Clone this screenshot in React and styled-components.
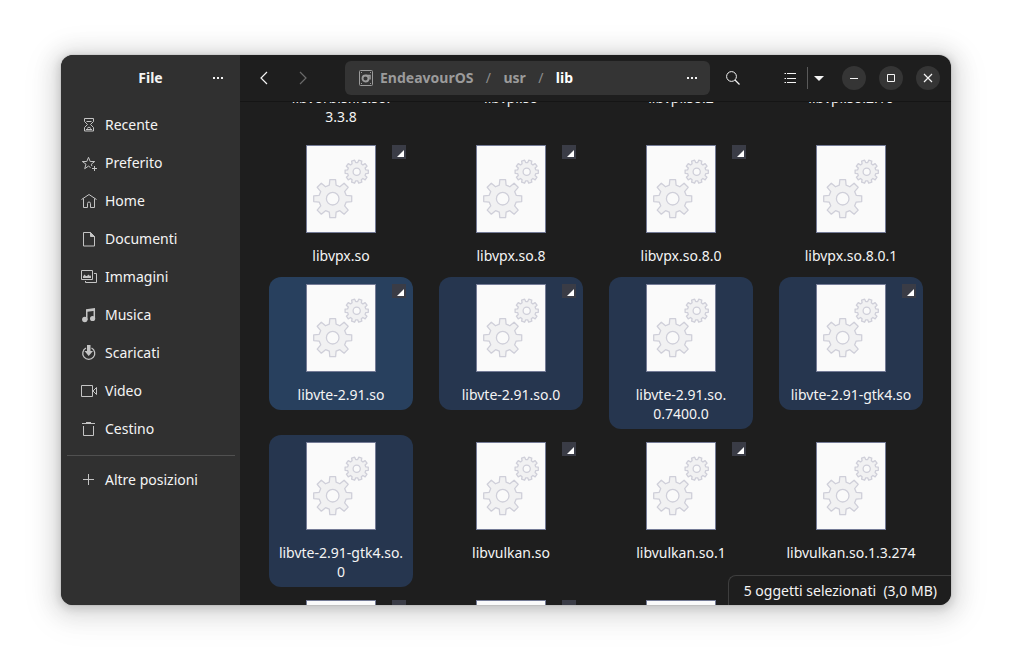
import styled, { createGlobalStyle } from "styled-components";
import { useLayoutEffect, useRef, useState } from "react";

const places = [
  { name: "Recente", icon: "recent" },
  { name: "Preferito", icon: "star" },
  { name: "Home", icon: "home" },
  { name: "Documenti", icon: "document" },
  { name: "Immagini", icon: "pictures" },
  { name: "Musica", icon: "music" },
  { name: "Scaricati", icon: "download" },
  { name: "Video", icon: "video" },
  { name: "Cestino", icon: "trash" },
];

const files = [
  { name: "libvorbisfile.so.\n3.3.8" },
  { name: "libvpl.so", link: true },
  { name: "libvpl.so.2", link: true },
  { name: "libvpl.so.2.10" },
  { name: "libvpx.so", link: true },
  { name: "libvpx.so.8", link: true },
  { name: "libvpx.so.8.0", link: true },
  { name: "libvpx.so.8.0.1" },
  { name: "libvte-2.91.so", link: true, selected: true },
  { name: "libvte-2.91.so.0", link: true, selected: true },
  { name: "libvte-2.91.so.\n0.7400.0", selected: true },
  { name: "libvte-2.91-gtk4.so", link: true, selected: true },
  { name: "libvte-2.91-gtk4.so.\n0", selected: true },
  { name: "libvulkan.so", link: true },
  { name: "libvulkan.so.1", link: true },
  { name: "libvulkan.so.1.3.274" },
  { name: "libwacom.so", link: true },
  { name: "libwacom.so.9", link: true },
  { name: "libwacom.so.9.0.0" },
  { name: "libwayland-client.so", link: true },
];

const icons = {
  recent: (
    <>
      <path d="M3.5 1.5h9v3L9.500 7.500 12.500 10.500v3.500h-9v-3.500L6.500 7.500 3.500 4.500z" />
      <path d="M5.500 4.500h5M5 12.500h6M6 11.500l2-1.500 2 1.500" />
    </>
  ),
  star: (
    <>
      <path d="M9.500 11.500 7.500 10.100 3.700 12.700l1.300-4.500L1.300 5.500h4.500L7.500 1.300l1.700 4.200h4.500L10.300 8.200l.6 2" transform="translate(0 1)" />
      <path d="M13.500 11v5M11 13.500h5" />
    </>
  ),
  home: <path d="M.5 6.500 8 1.500l7.500 5M2.500 5.500v9h4v-4q0-1.500 1.500-1.500t1.500 1.500v4h4v-9" />,
  document: (
    <>
      <path d="M2.500 1.500h7l4 4v9.500h-11z" />
      <path d="M9.500 1.500v4h4z" fill="currentColor" />
    </>
  ),
  pictures: (
    <>
      <path d="M.5 1.500h11v9H.5zM13 4.500h2.500v9h-11V12" />
      <path d="M2 9V7.500L3.500 5.500l1.500 1.500L6 7l1.500-1.500L8.500 7 9 6l1 1.500V9z" fill="currentColor" stroke="none" />
    </>
  ),
  music: (
    <>
      <path d="M5 2.200 14 1v2.700L6.500 4.700V13H5z" fill="currentColor" stroke="none" />
      <path d="M13.300 2v9.500" strokeWidth="1.500" />
      <circle cx="3.800" cy="12.500" r="2.700" fill="currentColor" stroke="none" />
      <circle cx="11.600" cy="11.500" r="2.600" fill="currentColor" stroke="none" />
    </>
  ),
  download: (
    <>
      <path d="M5 3A6 6 0 1 0 10.500 3" strokeWidth="1.300" />
      <path d="M6 0h3.500v6H12L7.700 11 3.500 6H6z" fill="currentColor" stroke="none" />
    </>
  ),
  video: <path d="M.5 2.500h11v11H.5zM12 8l3.500-3.500v7z" />,
  trash: <path d="M2.500 5v9.500h10V5M1 2.500h13M5 1.500h5" />,
  plus: <path d="M7.500 2v11M2 7.500h11" />,
  back: <path d="M11 2 5 8l6 6" strokeWidth="1.200" />,
  forward: <path d="M5 2l6 6-6 6" strokeWidth="1.200" />,
  dots: <path d="M3 7h2v2H3zM7 7h2v2H7zM11 7h2v2h-2z" fill="currentColor" stroke="none" />,
  search: (
    <>
      <circle cx="6.500" cy="6.500" r="4.900" />
      <path d="M10 10l4.500 4.500" strokeWidth="1.300" />
    </>
  ),
  list: <path d="M5 3.500h9M5 8.500h9M5 12.500h9M2.500 3.500h1.500M2.500 8.500h1.500M2.500 12.500h1.500" />,
  down: <path d="M3 6h10L8 11z" fill="currentColor" stroke="none" />,
  minimize: <path d="M4 8.500h8" />,
  maximize: <path d="M4.500 4.500h7v7h-7z" />,
  close: <path d="M4 4l8 8M12 4l-8 8" strokeWidth="1.200" />,
  drive: (
    <>
      <rect x="1.500" y=".5" width="13" height="15" rx="1" />
      <circle cx="7.500" cy="8.500" r="3" strokeWidth="1.900" />
      <path d="M7.500 5.500H12v4" strokeWidth="1.500" />
      <path d="M3 2h1v1H3zM12 2h1v1h-1zM3 13h1v1H3zM12 13h1v1h-1z" fill="currentColor" stroke="none" />
    </>
  ),
};

function Icon({ name }) {
  return (
    <Glyph viewBox="0 0 16 16" aria-hidden="true">
      {icons[name]}
    </Glyph>
  );
}

function gearPath(cx, cy, outer, root, teeth, half, turn) {
  const points = [];
  for (let i = 0; i < teeth; i++) {
    const a = turn + (i * 2 * Math.PI) / teeth;
    const corners = [
      [root, -half],
      [outer, -half * 0.85],
      [outer, half * 0.85],
      [root, half],
    ];
    corners.forEach(([x, y]) => {
      const px = cx + x * Math.cos(a) - y * Math.sin(a);
      const py = cy + x * Math.sin(a) + y * Math.cos(a);
      points.push(`${px.toFixed(2)} ${py.toFixed(2)}`);
    });
  }
  return `M${points.join("L")}Z`;
}

const bigGear = gearPath(26.7, 53.7, 19, 13.5, 8, 3.4, 0);
const smallGear = gearPath(50.7, 26.7, 11.6, 9, 10, 1.9, 0);

function LibraryPage() {
  return (
    <Page viewBox="0 0 70 88" aria-hidden="true">
      <rect x=".5" y=".5" width="69" height="87" fill="#fafafa" stroke="#747b96" />
      <g fill="#f1f1f2" stroke="#cfcfd9" strokeWidth="1.300" strokeLinejoin="round">
        <path d={bigGear} />
        <path d={smallGear} />
        <circle cx="26.700" cy="53.700" r="6.300" fill="#fafafa" />
        <circle cx="50.700" cy="26.700" r="3.600" fill="#fafafa" />
      </g>
    </Page>
  );
}

export default function App() {
  const [selected, setSelected] = useState(
    files.filter((file) => file.selected).map((file) => file.name)
  );
  const view = useRef(null);

  useLayoutEffect(() => {
    view.current.scrollTop = 122;
  }, []);

  return (
    <Desktop>
      <GlobalStyle />
      <Window>
        <Sidebar>
          <SidebarHeader>
            <Title>File</Title>
            <IconButton type="button" aria-label="Menu">
              <Icon name="dots" />
            </IconButton>
          </SidebarHeader>
          <Places>
            {places.map((place) => (
              <Place href="#" key={place.name}>
                <Icon name={place.icon} />
                {place.name}
              </Place>
            ))}
            <Separator />
            <Place href="#">
              <Icon name="plus" />
              Altre posizioni
            </Place>
          </Places>
        </Sidebar>

        <Main>
          <Header>
            <Navigation>
              <IconButton type="button" aria-label="Indietro">
                <Icon name="back" />
              </IconButton>
              <IconButton type="button" aria-label="Avanti" disabled>
                <Icon name="forward" />
              </IconButton>
            </Navigation>
            <PathBar>
              <Crumb href="#">
                <Icon name="drive" />
                EndeavourOS
              </Crumb>
              <Slash>/</Slash>
              <Crumb href="#">usr</Crumb>
              <Slash>/</Slash>
              <Crumb href="#" $current>
                lib
              </Crumb>
              <PathMenu type="button" aria-label="Menu cartella">
                <Icon name="dots" />
              </PathMenu>
            </PathBar>
            <IconButton type="button" aria-label="Cerca">
              <Icon name="search" />
            </IconButton>
            <ViewSwitch>
              <IconButton type="button" aria-label="Vista elenco">
                <Icon name="list" />
              </IconButton>
              <Options type="button" aria-label="Opzioni vista">
                <Icon name="down" />
              </Options>
            </ViewSwitch>
            <WindowButtons>
              <Round type="button" aria-label="Minimizza">
                <Icon name="minimize" />
              </Round>
              <Round type="button" aria-label="Massimizza">
                <Icon name="maximize" />
              </Round>
              <Round type="button" aria-label="Chiudi">
                <Icon name="close" />
              </Round>
            </WindowButtons>
          </Header>

          <View ref={view}>
            <Files>
              {files.map((file, i) => (
                <File
                  type="button"
                  key={file.name}
                  $selected={selected.includes(file.name)}
                  $focused={i === 8}
                  onClick={() => setSelected([file.name])}
                >
                  <LibraryPage />
                  {file.link && <Emblem />}
                  <span>{file.name}</span>
                </File>
              ))}
            </Files>
          </View>
          <Status>5 oggetti selezionati&nbsp; (3,0 MB)</Status>
        </Main>
      </Window>
    </Desktop>
  );
}

const GlobalStyle = createGlobalStyle`
  * {
    box-sizing: border-box;
  }

  body {
    margin: 0;
    background-color: white;
  }

  button, a {
    font: inherit;
    color: inherit;
    text-decoration: none;
  }

  button {
    padding: 0;
    border: none;
    background: none;
  }
`;

const Desktop = styled.div`
  height: 100vh;
  padding: 55px 61px 67px;
  display: flex;
  font-family: "Noto Sans", sans-serif;
  font-size: 14px;
  line-height: 19px;
  color: #f4f4f4;
`;

const Window = styled.div`
  flex: 1;
  min-width: 0;
  display: flex;
  overflow: hidden;
  border-radius: 12px;
  background-color: #1e1e1e;
  box-shadow: 0 2px 8px 2px rgba(0, 0, 0, 0.13),
    0 3px 20px 10px rgba(0, 0, 0, 0.09), 0 6px 32px 16px rgba(0, 0, 0, 0.04),
    0 0 0 1px rgba(0, 0, 0, 0.05);
`;

const Sidebar = styled.aside`
  flex: 0 0 179px;
  line-height: 20px;
  background-color: #303030;
`;

const SidebarHeader = styled.div`
  height: 46px;
  padding: 0 5px;
  display: grid;
  grid-template-columns: 34px 1fr 34px;
  align-items: center;
`;

const Title = styled.h1`
  grid-column: 2;
  margin: 0;
  font-size: 14px;
  text-align: center;
`;

const Glyph = styled.svg`
  flex: none;
  display: block;
  width: 16px;
  height: 16px;
  fill: none;
  stroke: currentColor;
`;

const IconButton = styled.button`
  flex: none;
  width: 34px;
  height: 34px;
  display: flex;
  align-items: center;
  justify-content: center;

  &:disabled {
    color: #6a6a6a;
  }
`;

const Places = styled.nav`
  padding: 5px 5px 5px 6px;
`;

const Place = styled.a`
  height: 38px;
  padding-left: 14px;
  display: flex;
  align-items: center;
  gap: 8px;

  ${Glyph} {
    color: #c4c4c4;
  }
`;

const Separator = styled.hr`
  height: 1px;
  margin: 7px 0 5px;
  border: none;
  background-color: #505050;
`;

const Main = styled.main`
  position: relative;
  flex: 1;
  min-width: 0;
  display: flex;
  flex-direction: column;
`;

const Header = styled.header`
  flex: none;
  height: 47px;
  padding: 0 11px 1px 7px;
  display: flex;
  align-items: center;
  gap: 6px;
  border-bottom: 1px solid #151515;
`;

const Navigation = styled.div`
  display: flex;
  gap: 5px;
  margin-right: 19px;
`;

const PathBar = styled.div`
  flex: 1;
  min-width: 0;
  height: 34px;
  padding: 0 1px 0 13px;
  display: flex;
  align-items: center;
  border-radius: 6px;
  background-color: #343434;
`;

const Crumb = styled.a`
  display: flex;
  align-items: center;
  gap: 6px;
  font-weight: 700;
  color: ${(props) => (props.$current ? "#ffffff" : "#9b9b9b")};
`;

const Slash = styled.span`
  width: 30px;
  text-align: center;
  color: #8c8c8c;
`;

const PathMenu = styled(IconButton)`
  margin-left: auto;
`;

const ViewSwitch = styled.div`
  display: flex;
  align-items: center;
  margin: 0 7px 0 17px;
`;

const Options = styled.button`
  width: 22px;
  height: 22px;
  display: flex;
  align-items: center;
  justify-content: center;
  border-left: 1px solid #5a5a5a;
`;

const WindowButtons = styled.div`
  display: flex;
  gap: 13px;
`;

const Round = styled.button`
  width: 24px;
  height: 24px;
  display: flex;
  align-items: center;
  justify-content: center;
  border-radius: 50%;
  background-color: #353535;
`;

const View = styled.div`
  flex: 1;
  min-height: 0;
  overflow-y: auto;
  scrollbar-width: none;
`;

const Files = styled.div`
  display: grid;
  grid-template-columns: repeat(auto-fill, 144px);
  justify-content: center;
  align-items: start;
  gap: 6px 26px;
  padding: 0 28px 6px 29px;
`;

const File = styled.button`
  position: relative;
  padding: 7px 6px 6px;
  display: flex;
  flex-direction: column;
  align-items: center;
  gap: 13px;
  border-radius: 12px;
  white-space: pre;
  background-color: ${(props) =>
    props.$selected ? (props.$focused ? "#28405e" : "#26364f") : "transparent"};
`;

const Page = styled.svg`
  display: block;
  width: 70px;
  height: 88px;
`;

/* corner mark of a symbolic link */
const Emblem = styled.i`
  position: absolute;
  top: 7px;
  right: 7px;
  width: 14px;
  height: 14px;
  padding: 5px 2px 2px 5px;
  background-color: #3a3c46;

  &::before {
    content: "";
    display: block;
    height: 7px;
    background-color: white;
    clip-path: polygon(100% 0, 100% 100%, 0 100%);
  }
`;

const Status = styled.div`
  position: absolute;
  right: 0;
  bottom: 0;
  padding: 5px 14px 5px 15px;
  border: 1px solid #3e3e3e;
  border-width: 1px 0 0 1px;
  border-radius: 8px 0 0 0;
  background-color: #1e1e1e;
`;
